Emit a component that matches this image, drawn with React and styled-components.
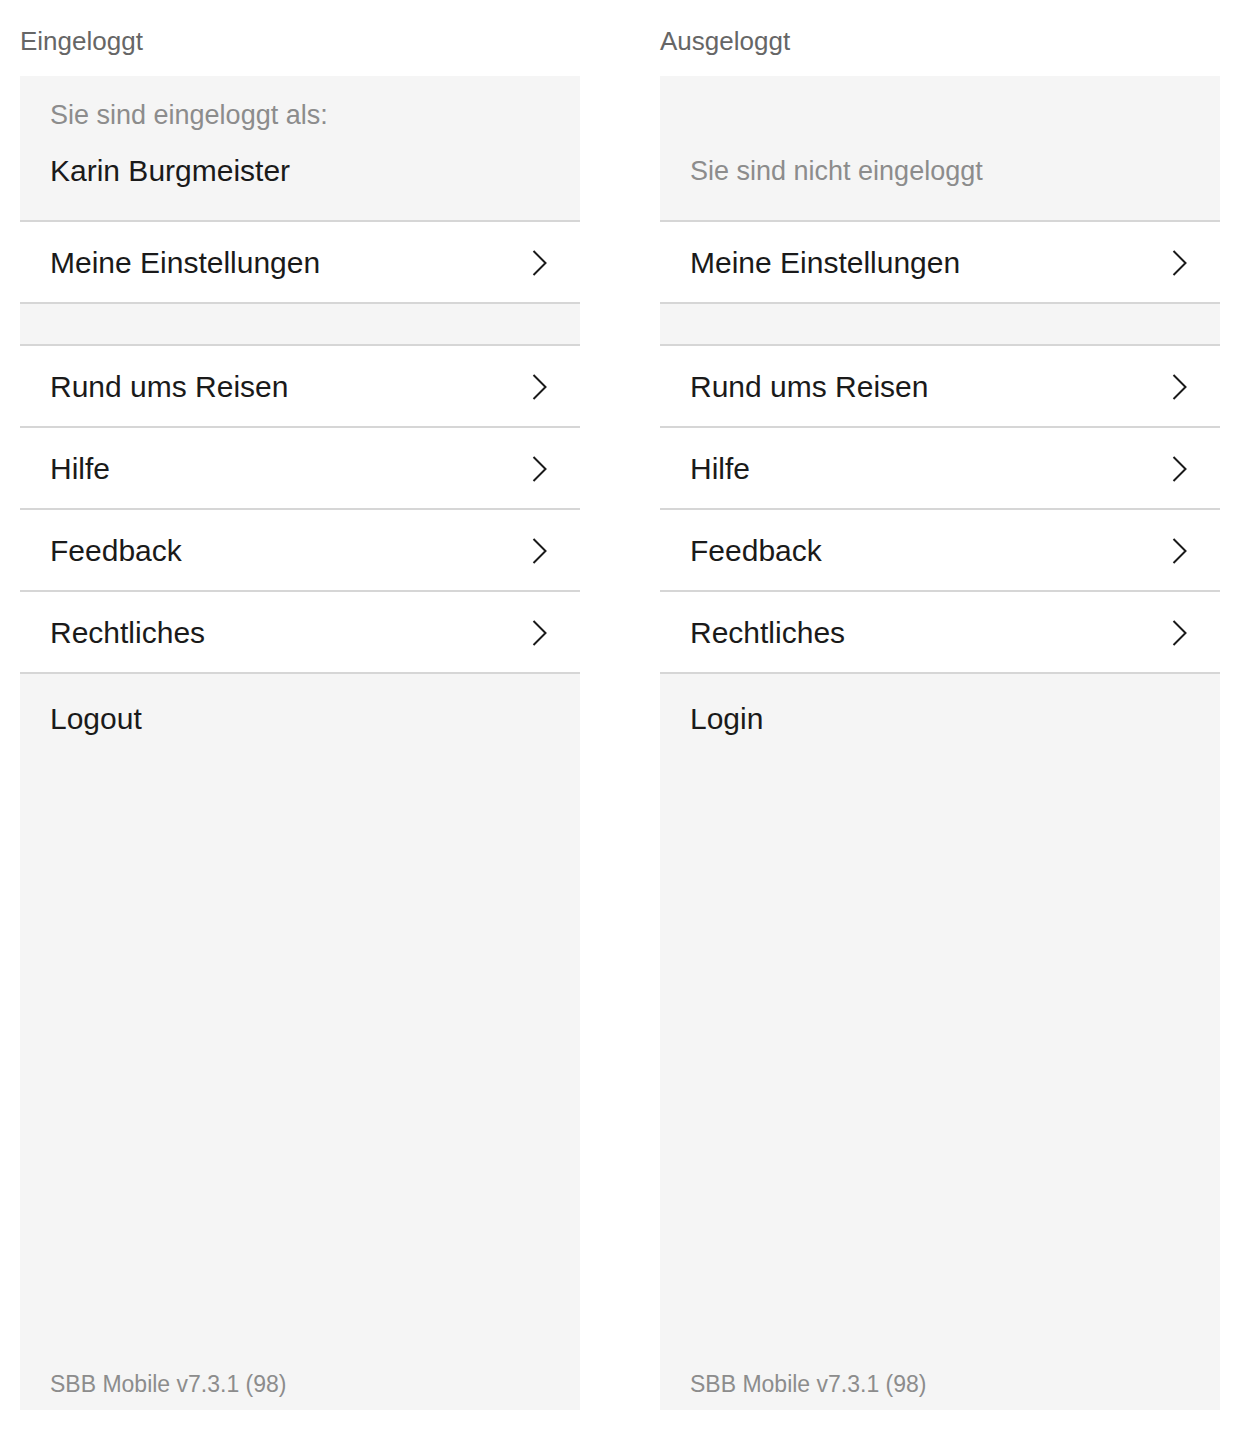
import styled, { createGlobalStyle } from 'styled-components';

const GlobalStyle = createGlobalStyle`
  body {
    margin: 0;
    background: #fff;
    font-family: "Liberation Sans", Arial, sans-serif;
  }
`;

const Page = styled.div`
  display: grid;
  grid-template-columns: 560px 560px;
  column-gap: 80px;
  padding: 26px 20px 20px;
  width: 1240px;
  box-sizing: border-box;
`;

const Column = styled.section`
  display: flex;
  flex-direction: column;
`;

const Title = styled.h2`
  margin: 0 0 20px;
  font-size: 26px;
  line-height: 30px;
  font-weight: 400;
  color: #666;
`;

const Panel = styled.div`
  display: flex;
  flex-direction: column;
  height: 1334px;
  background: #f5f5f5;
`;

// 144px of grey plus its 2px rule
const Header = styled.div`
  height: 113px;
  display: flex;
  flex-direction: column;
  justify-content: flex-end;
  padding: 0 30px 31px;
  border-bottom: 2px solid #d6d6d6;
`;

const Hint = styled.div`
  font-size: 27px;
  line-height: ${(p) => (p.$tall ? '36px' : '32px')};
  color: #8c8c8c;
  margin-bottom: ${(p) => (p.$tall ? '0' : '22px')};
`;

const UserName = styled.div`
  font-size: 30px;
  line-height: 36px;
  color: #1a1a1a;
`;

const Row = styled.div`
  height: 79px;
  padding: 1px 33px 0 30px;
  display: flex;
  align-items: center;
  justify-content: space-between;
  background: #fff;
  border-bottom: 2px solid #d6d6d6;
  font-size: 30px;
  color: #1a1a1a;
`;

const Spacer = styled.div`
  height: 40px;
  border-bottom: 2px solid #d6d6d6;
`;

const Bottom = styled.div`
  flex: 1;
  display: flex;
  flex-direction: column;
  padding: 27px 30px 12px;
`;

const Action = styled.div`
  font-size: 30px;
  line-height: 36px;
  color: #1a1a1a;
`;

const Version = styled.div`
  margin-top: auto;
  font-size: 23px;
  line-height: 28px;
  color: #8c8c8c;
`;

const Chevron = () => (
  <svg width="15" height="26" viewBox="0 0 15 26">
    <polyline points="1.5,1 13.5,13 1.5,25" fill="none" stroke="#1a1a1a" strokeWidth="2" />
  </svg>
);

const MenuRow = ({ label }) => (
  <Row>
    <span>{label}</span>
    <Chevron />
  </Row>
);

const Menu = ({ title, loggedIn }) => (
  <Column>
    <Title>{title}</Title>
    <Panel>
      <Header>
        {loggedIn ? (
          <>
            <Hint>Sie sind eingeloggt als:</Hint>
            <UserName>Karin Burgmeister</UserName>
          </>
        ) : (
          <Hint $tall>Sie sind nicht eingeloggt</Hint>
        )}
      </Header>
      <MenuRow label="Meine Einstellungen" />
      <Spacer />
      <MenuRow label="Rund ums Reisen" />
      <MenuRow label="Hilfe" />
      <MenuRow label="Feedback" />
      <MenuRow label="Rechtliches" />
      <Bottom>
        <Action>{loggedIn ? 'Logout' : 'Login'}</Action>
        <Version>SBB Mobile v7.3.1 (98)</Version>
      </Bottom>
    </Panel>
  </Column>
);

export default function App() {
  return (
    <>
      <GlobalStyle />
      <Page>
        <Menu title="Eingeloggt" loggedIn />
        <Menu title="Ausgeloggt" />
      </Page>
    </>
  );
}
